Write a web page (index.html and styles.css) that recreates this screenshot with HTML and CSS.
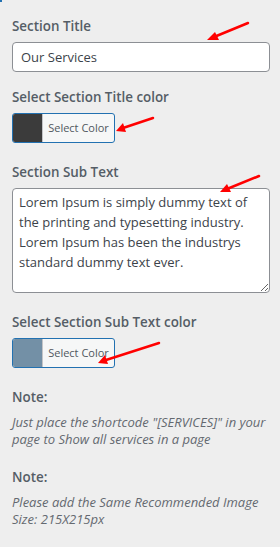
FILE: index.html
```html
<!DOCTYPE html>
<html lang="en">
<head>
    <meta charset="UTF-8">
    <meta name="viewport" content="width=device-width, initial-scale=1.0">
    <title>Services Section Settings</title>
    <link rel="stylesheet" href="styles.css">
</head>
<body>
    <span class="corner-mark"></span>
    <div class="panel">
        <div class="control">
            <label for="section-title" class="control-title">Section Title</label>
            <input type="text" id="section-title" value="Our Services">
        </div>
        <div class="control wide-gap">
            <span class="control-title">Select Section Title color</span>
            <button type="button" class="color-button">
                <span class="swatch swatch-dark"></span>
                <span class="color-label">Select Color</span>
            </button>
        </div>
        <div class="control wide-gap">
            <label for="section-sub" class="control-title">Section Sub Text</label>
            <textarea id="section-sub" rows="5">Lorem Ipsum is simply dummy text of the printing and typesetting industry. Lorem Ipsum has been the industrys standard dummy text ever.</textarea>
        </div>
        <div class="control wide-gap">
            <span class="control-title">Select Section Sub Text color</span>
            <button type="button" class="color-button">
                <span class="swatch swatch-grey"></span>
                <span class="color-label">Select Color</span>
            </button>
        </div>
        <div class="control note">
            <span class="control-title">Note:</span>
            <p class="description">Just place the shortcode "[SERVICES]" in your page to Show all services in a page</p>
        </div>
        <div class="control note">
            <span class="control-title">Note:</span>
            <p class="description">Please add the Same Recommended Image Size: 215X215px</p>
        </div>
    </div>

    <!-- annotation arrows drawn over the screenshot -->
    <svg class="arrows" width="280" height="547" viewBox="0 0 280 547">
        <g stroke="#f00" stroke-width="2.5" stroke-linecap="round" fill="#f00">
            <line x1="248" y1="23" x2="214" y2="37"/>
            <polygon points="207,40 215,32 219,40" stroke="none"/>
            <line x1="153" y1="118" x2="123" y2="128"/>
            <polygon points="116,131 123,123 126,132" stroke="none"/>
            <line x1="259" y1="176" x2="227" y2="189"/>
            <polygon points="220,192 227,184 231,192" stroke="none"/>
            <line x1="159" y1="343" x2="106" y2="360"/>
            <polygon points="98,363 105,355 108,364" stroke="none"/>
        </g>
    </svg>
</body>
</html>
```

FILE: styles.css
```css
* {
    margin: 0;
    padding: 0;
    box-sizing: border-box;
}

body {
    width: 280px;
    height: 547px;
    background: #eeeeee;
    font-family: "Open Sans", "Noto Sans", sans-serif;
    color: #50575e;
    position: relative;
    overflow: hidden;
}

.corner-mark {
    position: absolute;
    top: 0;
    left: 0;
    width: 2px;
    height: 2px;
    background: #2271b1;
}

.panel {
    padding: 16px 10px 0 12px;
}

.control {
    margin-bottom: 15px;
}

.wide-gap {
    margin-bottom: 19px;
}

.control-title {
    display: block;
    font-size: 13.4px;
    font-weight: 600;
    line-height: 20px;
    margin-bottom: 6px;
    color: #555d66;
}

input[type="text"],
textarea {
    display: block;
    width: 258px;
    border: 1px solid #8c8f94;
    border-radius: 4px;
    background: #fff;
    font-family: inherit;
    font-size: 13px;
    color: #3c434a;
    outline: none;
}

input[type="text"] {
    height: 30px;
    padding: 0 8px;
}

textarea {
    height: 105px;
    padding: 3px 6px;
    line-height: 20px;
    resize: vertical;
}

.color-button {
    display: flex;
    width: 103px;
    height: 30px;
    border: 1px solid #2271b1;
    border-radius: 3px;
    background: #f6f7f7;
    overflow: hidden;
    cursor: pointer;
    font-family: inherit;
}

.swatch {
    width: 30px;
    height: 100%;
    border-right: 1px solid #c3c4c7;
}

.swatch-dark {
    background: #3b3b3b;
}

.swatch-grey {
    background: #7390a6;
}

.color-label {
    flex: 1;
    font-size: 11px;
    line-height: 28px;
    color: #50575e;
    text-align: center;
}

.note {
    margin-bottom: 19px;
}

.note .control-title {
    margin-bottom: 7px;
}

.description {
    font-size: 13px;
    font-style: italic;
    line-height: 17px;
    color: #646970;
}

.arrows {
    position: absolute;
    top: 0;
    left: 0;
    pointer-events: none;
}
```
